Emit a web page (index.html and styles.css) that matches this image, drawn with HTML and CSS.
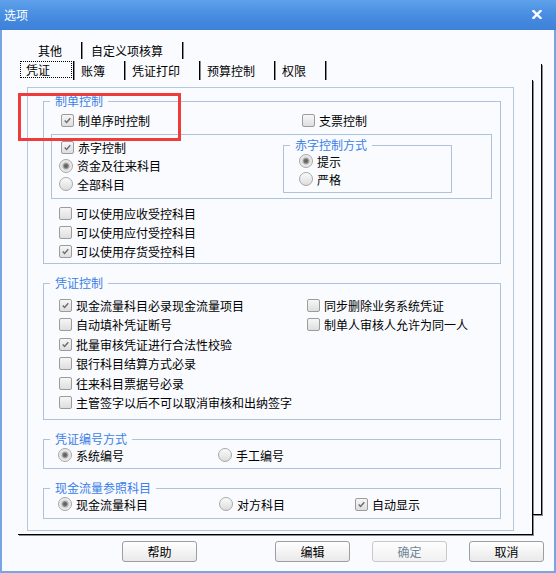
FILE: index.html
```html
<!DOCTYPE html>
<html lang="zh-CN">
<head>
    <meta charset="UTF-8">
    <meta name="viewport" content="width=device-width, initial-scale=1.0">
    <title>选项</title>
    <link rel="stylesheet" href="styles.css">
</head>
<body>
    <div class="window">
        <!-- 标题栏 -->
        <div class="titlebar">
            <span class="title">选项</span>
            <svg class="close" width="10" height="9" viewBox="0 0 10 9">
                <path d="M1.5 1 L8.5 8 M8.5 1 L1.5 8" stroke="#fff" stroke-width="2.4" stroke-linecap="square"/>
            </svg>
        </div>

        <div class="frame">
            <!-- 两排页签 -->
            <div class="tab-row tab-row-back">
                <div class="tab">其他</div>
                <div class="tab">自定义项核算</div>
            </div>
            <div class="tab-row tab-row-front">
                <div class="tab tab-active"><span class="focus">凭证</span></div>
                <div class="tab">账簿</div>
                <div class="tab">凭证打印</div>
                <div class="tab">预算控制</div>
                <div class="tab">权限</div>
            </div>

            <div class="pages">
                <div class="page">
                    <div class="panel">
                        <!-- 制单控制 -->
                        <div class="group">
                            <div class="legend">制单控制</div>
                            <div class="row-a">
                                <label class="opt opt-wide"><span class="cb on"><svg viewBox="0 0 13 13"><path d="M3.2 6.6 L5.4 8.8 L9.8 3.8"/></svg></span>制单序时控制</label>
                                <label class="opt"><span class="cb"></span>支票控制</label>
                            </div>
                            <div class="deficit">
                                <div class="deficit-col">
                                    <label class="opt opt-shift"><span class="cb on"><svg viewBox="0 0 13 13"><path d="M3.2 6.6 L5.4 8.8 L9.8 3.8"/></svg></span>赤字控制</label>
                                    <label class="opt"><span class="rb on"></span>资金及往来科目</label>
                                    <label class="opt"><span class="rb"></span>全部科目</label>
                                </div>
                                <div class="subgroup">
                                    <div class="legend">赤字控制方式</div>
                                    <div class="sub-list">
                                        <label class="opt"><span class="rb on"></span>提示</label>
                                        <label class="opt"><span class="rb"></span>严格</label>
                                    </div>
                                </div>
                            </div>
                            <div class="ctl-list">
                                <label class="opt"><span class="cb"></span>可以使用应收受控科目</label>
                                <label class="opt"><span class="cb"></span>可以使用应付受控科目</label>
                                <label class="opt"><span class="cb on"><svg viewBox="0 0 13 13"><path d="M3.2 6.6 L5.4 8.8 L9.8 3.8"/></svg></span>可以使用存货受控科目</label>
                            </div>
                        </div>

                        <!-- 凭证控制 -->
                        <div class="group">
                            <div class="legend">凭证控制</div>
                            <div class="check-grid">
                                <label class="opt"><span class="cb on"><svg viewBox="0 0 13 13"><path d="M3.2 6.6 L5.4 8.8 L9.8 3.8"/></svg></span>现金流量科目必录现金流量项目</label>
                                <label class="opt"><span class="cb"></span>同步删除业务系统凭证</label>
                                <label class="opt"><span class="cb"></span>自动填补凭证断号</label>
                                <label class="opt"><span class="cb"></span>制单人审核人允许为同一人</label>
                                <label class="opt"><span class="cb on"><svg viewBox="0 0 13 13"><path d="M3.2 6.6 L5.4 8.8 L9.8 3.8"/></svg></span>批量审核凭证进行合法性校验</label>
                                <span></span>
                                <label class="opt"><span class="cb"></span>银行科目结算方式必录</label>
                                <span></span>
                                <label class="opt"><span class="cb"></span>往来科目票据号必录</label>
                                <span></span>
                                <label class="opt"><span class="cb"></span>主管签字以后不可以取消审核和出纳签字</label>
                            </div>
                        </div>

                        <!-- 凭证编号方式 -->
                        <div class="group">
                            <div class="legend">凭证编号方式</div>
                            <div class="line-row">
                                <label class="opt col-160"><span class="rb on"></span>系统编号</label>
                                <label class="opt"><span class="rb"></span>手工编号</label>
                            </div>
                        </div>

                        <!-- 现金流量参照科目 -->
                        <div class="group group-last">
                            <div class="legend">现金流量参照科目</div>
                            <div class="line-row">
                                <label class="opt col-161"><span class="rb on"></span>现金流量科目</label>
                                <label class="opt col-136"><span class="rb"></span>对方科目</label>
                                <label class="opt"><span class="cb on"><svg viewBox="0 0 13 13"><path d="M3.2 6.6 L5.4 8.8 L9.8 3.8"/></svg></span>自动显示</label>
                            </div>
                        </div>
                    </div>
                </div>
                <div class="page-behind"></div>
            </div>

            <!-- 底部按钮 -->
            <div class="buttons">
                <button class="btn btn-help">帮助</button>
                <button class="btn">编辑</button>
                <button class="btn" disabled>确定</button>
                <button class="btn">取消</button>
            </div>
        </div>

        <!-- 红色标注框 -->
        <div class="mark"></div>
    </div>
</body>
</html>
```

FILE: styles.css
```css
/* 基础样式 */
* {
    margin: 0;
    padding: 0;
    box-sizing: border-box;
}

html, body {
    background: #f9fbff;
    color: #000;
    font-family: "Noto Sans CJK SC", "Liberation Sans", sans-serif;
    font-size: 12px;
}

.window {
    position: relative;
    width: 556px;
    height: 573px;
    overflow: hidden;
    display: flex;
    flex-direction: column;
}

/* 标题栏 */
.titlebar {
    height: 30px;
    display: flex;
    align-items: center;
    justify-content: space-between;
    padding: 0 14px 1px 4px;
    background: linear-gradient(to bottom, #5fa1ea 0%, #4a8fe2 45%, #3c80d8 100%);
}

.title {
    color: #fff;
    font-size: 12px;
    line-height: 14px;
}

.close {
    display: block;
}

.frame {
    flex: 1;
    border-left: 2px solid #79a6e3;
    border-right: 2px solid #79a6e3;
    border-bottom: 2px solid #79a6e3;
    background: #f9fbff;
}

/* 页签 */
.tab-row {
    display: flex;
}

.tab-row-back {
    margin: 12px 0 0 27px;
    height: 17px;
    line-height: 17px;
}

.tab-row-front {
    margin: 2px 0 0 16px;
    height: 19px;
    line-height: 19px;
}

.tab {
    padding: 0 19px 0 9px;
    border-right: 1px solid #000;
    box-shadow: 1px 0 0 #8c8c8c;
    white-space: nowrap;
}

.tab-row-front .tab {
    padding: 0 19px 0 7px;
}

.tab-row-front .tab-active {
    padding: 0 1px 0 2px;
}

.focus {
    display: inline-block;
    height: 17px;
    line-height: 15px;
    padding: 0 21px 0 5px;
    border: 1px dotted #000;
    vertical-align: top;
}

/* 页面叠放 */
.pages {
    display: flex;
    align-items: flex-start;
    margin-left: 16px;
}

.page {
    width: 515px;
    height: 455px;
    padding: 7px 0 0 9px;
    border-right: 1px solid #000;
    border-bottom: 1px solid #000;
    box-shadow: 1px 1px 0 #8c8c8c;
}

.page-behind {
    width: 9px;
    height: 451px;
    margin-top: -16px;
    border-right: 1px solid #000;
    border-bottom: 1px solid #000;
    box-shadow: 1px 1px 0 #8c8c8c;
}

.panel {
    width: 487px;
    height: 444px;
    padding: 13px 12px 11px 15px;
    border: 1px solid #b3c8dd;
}

/* 分组框 */
.group {
    border: 1px solid #aec3da;
    margin-bottom: 19px;
}

.group-last {
    margin-bottom: 0;
}

.legend {
    display: table;
    margin: -8px 0 0 6px;
    padding: 0 5px;
    line-height: 14px;
    color: #3a80e6;
    background: #f9fbff;
    white-space: nowrap;
}

/* 选项行 */
.opt {
    display: flex;
    align-items: center;
    gap: 4px;
    height: 19px;
    white-space: nowrap;
}

.cb {
    flex: none;
    width: 13px;
    height: 13px;
    border: 1px solid #9c9c9c;
    border-radius: 2px;
    background: linear-gradient(to bottom, #f6f6f6, #dedede);
}

.cb svg {
    display: block;
    width: 11px;
    height: 11px;
}

.cb path {
    fill: none;
    stroke: #6b6b6b;
    stroke-width: 1.6;
}

.rb {
    flex: none;
    width: 14px;
    height: 14px;
    border: 1px solid #a8a8a8;
    border-radius: 50%;
    background: linear-gradient(to bottom, #fbfbfb, #dcdcdc);
}

.rb.on {
    background: radial-gradient(circle, #555 0, #777 2px, #cfcfcf 3.5px, #ededed 5px, #e4e4e4 100%);
}

.row-a {
    display: flex;
    margin-top: 3px;
    padding-left: 17px;
}

.opt-wide {
    width: 241px;
}

/* 赤字控制 */
.deficit {
    display: flex;
    align-items: flex-start;
    margin: 4px 8px 0 7px;
    border: 1px solid #aec3da;
}

.deficit-col {
    width: 231px;
    padding: 3px 0 4.5px 7px;
}

.deficit-col .opt {
    height: 18.5px;
}

.opt-shift {
    margin-left: 2px;
}

.subgroup {
    width: 169px;
    margin-top: 10px;
    border: 1px solid #aec3da;
}

.sub-list {
    padding: 0 0 4px 15px;
}

.sub-list .opt {
    height: 18px;
}

.ctl-list {
    margin-top: 4.5px;
    padding: 0 0 2.5px 15px;
}

/* 凭证控制 */
.check-grid {
    display: grid;
    grid-template-columns: 248px auto;
    grid-auto-rows: 19.5px;
    padding: 5.25px 0 6.75px 15px;
}

.check-grid .opt {
    height: 19.5px;
}

/* 单行分组 */
.line-row {
    display: flex;
    padding: 0 0 4px 14px;
}

.group-last .line-row {
    padding-bottom: 5px;
}

.line-row .opt {
    height: 18px;
}

.col-160 {
    width: 160px;
}

.col-161 {
    width: 161px;
}

.col-136 {
    width: 136px;
}

/* 按钮 */
.buttons {
    display: flex;
    gap: 22px;
    margin: 6px 0 0 120px;
}

.btn {
    width: 75px;
    height: 21px;
    font-family: inherit;
    font-size: 12px;
    line-height: 19px;
    color: #000;
    border: 1px solid #9e9e9e;
    border-radius: 3px;
    background: linear-gradient(to bottom, #ffffff, #e9e9e9);
}

.btn-help {
    margin-right: 56px;
}

.btn:disabled {
    color: #70859a;
    border-color: #c9c9c9;
    background: linear-gradient(to bottom, #fdfdfd, #f1f1f1);
}

/* 标注 */
.mark {
    position: absolute;
    left: 18px;
    top: 93px;
    width: 163px;
    height: 48px;
    border: 3px solid #f03b3b;
    pointer-events: none;
}
```
